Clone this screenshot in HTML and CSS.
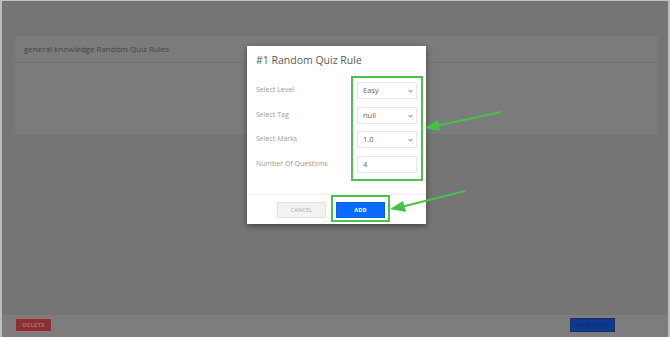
FILE: index.html
```html
<!DOCTYPE html>
<html lang="en">
<head>
    <meta charset="UTF-8">
    <meta name="viewport" content="width=device-width, initial-scale=1.0">
    <title>Random Quiz Rules</title>
    <link rel="stylesheet" href="styles.css">
</head>
<body>
    <div class="frame">
        <div class="page">
            <div class="card">
                <div class="card-header">general knowledge Random Quiz Rules</div>
                <div class="card-body"></div>
            </div>

            <div class="footer-bar">
                <button class="btn-delete">DELETE</button>
                <button class="btn-add-rule">ADD RULE</button>
            </div>
        </div>

        <!-- modal -->
        <div class="modal">
            <div class="modal-header">#1 Random Quiz Rule</div>
            <div class="modal-body">
                <div class="labels">
                    <label>Select Level</label>
                    <label>Select Tag</label>
                    <label>Select Marks</label>
                    <label>Number Of Questions</label>
                </div>
                <div class="fields highlight">
                    <div class="field select">Easy<span class="chev"></span></div>
                    <div class="field select">null<span class="chev"></span></div>
                    <div class="field select">1.0<span class="chev"></span></div>
                    <div class="field">4</div>
                </div>
            </div>
            <div class="modal-footer">
                <button class="btn-cancel">CANCEL</button>
                <div class="highlight add-wrap">
                    <button class="btn-add">ADD</button>
                </div>
            </div>
        </div>

        <svg class="arrows" width="670" height="337" viewBox="0 0 670 337">
            <line x1="501" y1="112" x2="436" y2="126" stroke="#46c246" stroke-width="2"/>
            <polygon points="425,128 438,120 440,131" fill="#46c246"/>
            <line x1="465" y1="191" x2="401" y2="207" stroke="#46c246" stroke-width="2"/>
            <polygon points="390,209 403,201 406,212" fill="#46c246"/>
        </svg>
    </div>
</body>
</html>
```

FILE: styles.css
```css
* {
    margin: 0;
    padding: 0;
    box-sizing: border-box;
    font-family: 'Open Sans', 'Noto Sans', sans-serif;
}

body {
    width: 670px;
    height: 337px;
    overflow: hidden;
    background: #757575;
}

.frame {
    position: relative;
    width: 670px;
    height: 337px;
    border-top: 1px solid #c2c2c2;
    border-left: 2px solid #bdbdbd;
    border-right: 2px solid #bdbdbd;
}

.page {
    height: 100%;
    display: flex;
    flex-direction: column;
    justify-content: space-between;
    background: #757575;
}

.card {
    margin: 35px 10px 0 13px;
    height: 98px;
    background: #7b7b7b;
}

.card-header {
    height: 27px;
    padding: 0 9px;
    line-height: 26px;
    font-size: 8px;
    color: #454545;
    border-bottom: 1px solid #737373;
}

.footer-bar {
    height: 22px;
    background: #7d7d7d;
    display: flex;
    justify-content: space-between;
    align-items: flex-start;
    padding: 3px 53px 0 13px;
}

.footer-bar button {
    height: 14px;
    border: 1px solid;
    font-size: 6px;
    font-weight: 700;
    letter-spacing: 0.2px;
}

.btn-delete {
    width: 37px;
    background: #8a2f34;
    border-color: #7a272c;
    color: #b56a6e;
}

.btn-add-rule {
    width: 45px;
    background: #0a3a94;
    border-color: #08307a;
    color: #1d2d5c;
}

/* modal sits over the dimmed page */
.modal {
    position: absolute;
    left: 245px;
    top: 45px;
    width: 179px;
    height: 178px;
    background: #fff;
    box-shadow: 0 2px 6px rgba(0, 0, 0, 0.45);
    display: flex;
    flex-direction: column;
}

.modal-header {
    height: 29px;
    padding: 7px 9px 0;
    font-size: 10.5px;
    line-height: 14px;
    color: #5a5a5a;
}

.modal-body {
    display: flex;
    justify-content: space-between;
    padding: 1px 3px 0 9px;
}

.labels {
    display: flex;
    flex-direction: column;
    gap: 7.7px;
    padding-top: 6px;
}

.labels label {
    height: 17px;
    line-height: 16px;
    font-size: 7px;
    color: #9a9a9a;
}

.highlight {
    border: 2px solid #4cc24c;
}

.fields {
    width: 72px;
    display: flex;
    flex-direction: column;
    gap: 7.7px;
    padding: 4px 4px 6px;
}

.field {
    position: relative;
    height: 17px;
    border: 1px solid #e6e6e6;
    padding-left: 5px;
    line-height: 15px;
    font-size: 7.5px;
    color: #666;
}

.chev {
    position: absolute;
    right: 4px;
    top: 6px;
    width: 3px;
    height: 3px;
    border-right: 1px solid #9a9a9a;
    border-bottom: 1px solid #9a9a9a;
    transform: rotate(45deg);
}

.modal-footer {
    margin-top: auto;
    border-top: 1px solid #f2f2f2;
    display: flex;
    align-items: flex-start;
    gap: 5px;
    padding: 0 0 2px 30px;
}

.modal-footer button {
    display: block;
    width: 49px;
    height: 16px;
    font-size: 5.5px;
    letter-spacing: 0.2px;
}

.btn-cancel {
    margin-top: 7px;
    background: #f2f2f2;
    border: 1px solid #e2e2e2;
    color: #aaa;
}

.add-wrap {
    padding: 5px 3px 2px;
}

.btn-add {
    background: #0a6cff;
    border: 1px solid #0a60e6;
    color: #fff;
    font-weight: 700;
}

.arrows {
    position: absolute;
    left: -2px;
    top: -1px;
    pointer-events: none;
}
```
